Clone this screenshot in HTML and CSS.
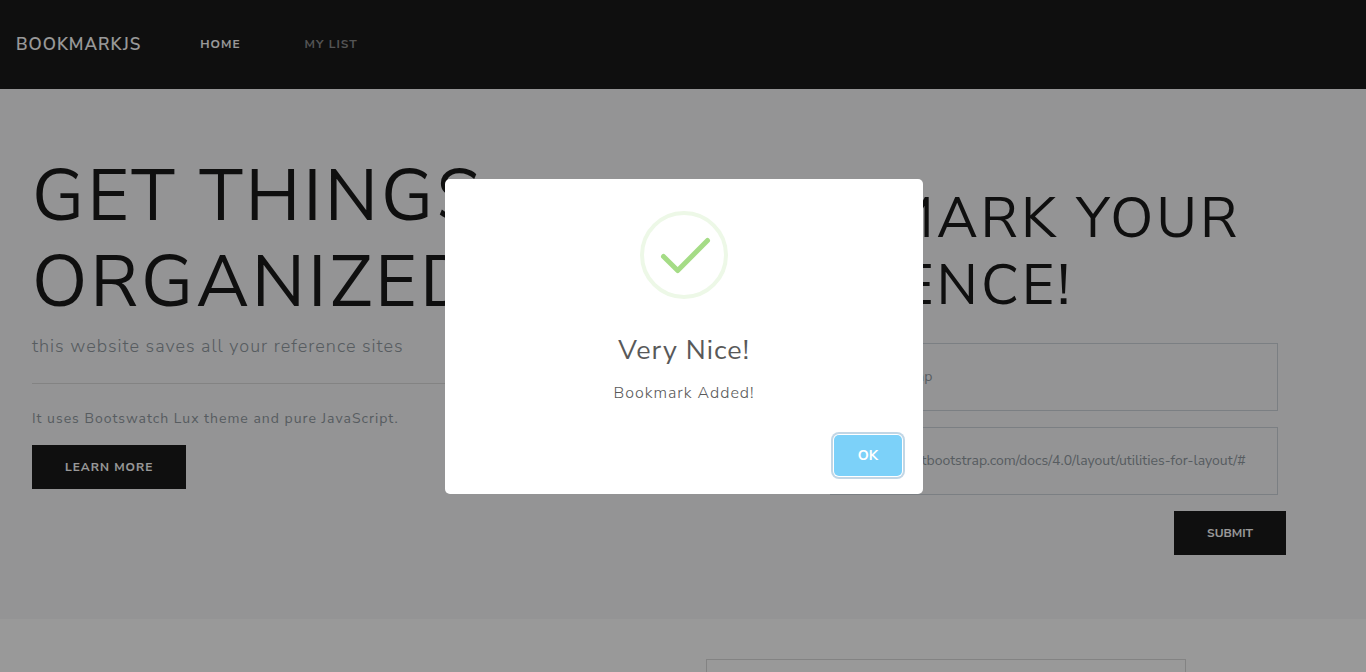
FILE: index.html
```html
<!DOCTYPE html>
<html lang="en">
<head>
<meta charset="utf-8">
<meta name="viewport" content="width=device-width, initial-scale=1">
<title>BookmarkJS</title>
<link rel="stylesheet" href="styles.css">
</head>
<body>
<nav class="navbar">
  <a class="brand" href="#">BookmarkJS</a>
  <a class="nav-link active" href="#">Home</a>
  <a class="nav-link" href="#">My List</a>
</nav>
<main>
  <section class="hero">
    <div class="intro">
      <h1 class="intro-title">Get things organized</h1>
      <p class="lead">this website saves all your reference sites</p>
      <hr class="rule">
      <p class="note">It uses Bootswatch Lux theme and pure JavaScript.</p>
      <a class="btn" href="#">Learn more</a>
    </div>
    <form class="bookmark-form">
      <h2 class="form-title">Bookmark your reference!</h2>
      <input class="field" type="text" aria-label="Site name" value="Boot-Strap">
      <input class="field" type="text" aria-label="Site URL" value="https://getbootstrap.com/docs/4.0/layout/utilities-for-layout/#">
      <button class="btn btn-submit" type="button">Submit</button>
    </form>
  </section>
  <section class="results">
    <div class="card"></div>
  </section>
</main>
<div class="overlay">
  <div class="modal" role="dialog" aria-modal="true" aria-labelledby="modal-title">
    <svg class="modal-icon" viewBox="0 0 88 88" aria-hidden="true">
      <circle cx="44" cy="44" r="42" fill="none" stroke="#edf8e7" stroke-width="4"/>
      <path d="M23.5 45.5 37.7 59.5 67.5 29.5" fill="none" stroke="#a5dc86" stroke-width="5" stroke-linecap="round" stroke-linejoin="round"/>
    </svg>
    <h2 class="modal-title" id="modal-title">Very Nice!</h2>
    <p class="modal-text">Bookmark Added!</p>
    <div class="modal-footer"><button class="modal-ok" type="button">OK</button></div>
  </div>
</div>
</body>
</html>
```
FILE: styles.css
```css
* { box-sizing: border-box; }
body {
  margin: 0;
  font-family: "Nunito Sans", Nunito, Lato, sans-serif;
  font-size: 14px;
  line-height: 21px;
  color: #919aa1;
  background: #fff;
}
h1, h2, p { margin: 0; font-weight: 400; }
a { text-decoration: none; }
.navbar {
  display: flex;
  align-items: center;
  padding: 24px 16px;
  min-height: 89px;
  background: #1a1a1a;
  text-transform: uppercase;
}
.brand {
  margin-right: 27px;
  font-size: 17px;
  font-weight: 600;
  letter-spacing: 1px;
  color: #fff;
}
.nav-link {
  padding: 8px 32px;
  font-size: 12px;
  font-weight: 700;
  letter-spacing: 1px;
  color: #8c8c8c;
}
.nav-link.active { color: #fff; }
.hero {
  display: grid;
  grid-template-columns: 1fr 1fr;
  padding: 64px 32px;
  background: #f7f7f9;
}
.intro-title, .form-title {
  color: #1a1a1a;
  text-transform: uppercase;
  letter-spacing: 3px;
}
.intro-title { font-size: 72px; line-height: 86px; margin-bottom: 8px; }
.lead { font-size: 18px; font-weight: 300; line-height: 26px; letter-spacing: 1px; }
.rule { margin: 24px 0; border: 0; border-top: 1px solid #dadada; }
.note { letter-spacing: 1px; margin-bottom: 16px; }
.btn {
  display: inline-block;
  padding: 12px 32px;
  border: 1px solid #1a1a1a;
  background: #1a1a1a;
  color: #fff;
  font-family: inherit;
  font-size: 12px;
  font-weight: 700;
  line-height: 18px;
  letter-spacing: 1px;
  text-transform: uppercase;
}
.bookmark-form {
  display: flex;
  flex-direction: column;
  align-items: flex-end;
  gap: 16px;
  padding: 32px 48px 0 32px;
}
.form-title { align-self: stretch; font-size: 56px; line-height: 67px; margin-bottom: 8px; }
.field {
  width: 448px;
  height: 68px;
  margin-right: 8px;
  padding: 0 31px 2px 32px;
  border: 1px solid #ced4da;
  background: transparent;
  color: #919aa1;
  font: inherit;
}
.btn-submit { letter-spacing: 0; }
.results { display: flex; padding: 40px 180px; justify-content: flex-end; }
.card { width: 480px; height: 200px; border: 1px solid #dadada; }
.overlay {
  position: fixed;
  inset: 0;
  display: flex;
  align-items: center;
  justify-content: center;
  padding-left: 2px;
  background: rgba(0, 0, 0, 0.4);
}
.modal {
  display: flex;
  flex-direction: column;
  align-items: center;
  width: 478px;
  padding: 32px 21px 18px;
  border-radius: 5px;
  background: #fff;
}
.modal-icon { width: 88px; height: 88px; margin-bottom: 32px; }
.modal-title { font-size: 27px; line-height: 40px; letter-spacing: 1px; color: #595959; }
.modal-text { margin-top: 11px; font-size: 16px; font-weight: 300; line-height: 22px; letter-spacing: 1px; color: #595959; }
.modal-footer { align-self: flex-end; margin-top: 31px; }
.modal-ok {
  display: block;
  padding: 10px 24px;
  border: 0;
  border-radius: 5px;
  background: #7cd1f9;
  box-shadow: 0 0 0 1px #fff, 0 0 0 3px rgba(43, 114, 165, 0.29);
  color: #fff;
  font: 700 14px/21px "Nunito Sans", Nunito, Lato, sans-serif;
}
```
